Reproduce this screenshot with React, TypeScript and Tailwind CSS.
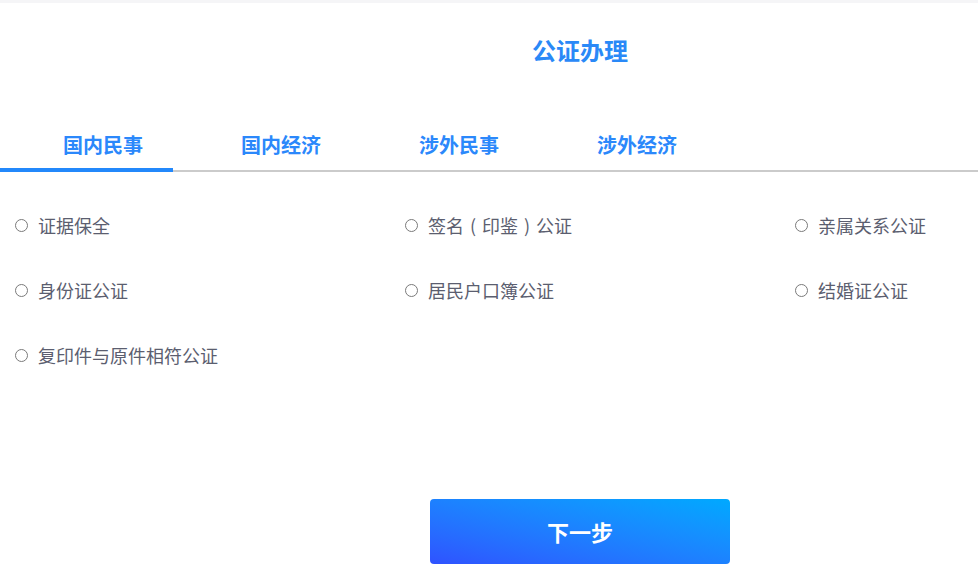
import React from 'react';

const tabs = ['国内民事', '国内经济', '涉外民事', '涉外经济'];

const items = [
  '证据保全',
  '签名（印鉴）公证',
  '亲属关系公证',
  '身份证公证',
  '居民户口簿公证',
  '结婚证公证',
  '复印件与原件相符公证',
];

const font = { fontFamily: '"Noto Sans CJK SC", "Noto Sans", sans-serif' };

// full-width parens drawn centred in their cell, as in the reference
function Label({ text }: { text: string }) {
  return (
    <span>
      {text.split(/([（）])/).map((part, i) =>
        part === '（' || part === '）' ? (
          <span key={i} className="inline-block w-[18px] text-center">
            {part === '（' ? '(' : ')'}
          </span>
        ) : (
          part
        )
      )}
    </span>
  );
}

export default function App() {
  return (
    <div className="w-[978px] h-[576px] overflow-hidden bg-white" style={font}>
      <div className="w-[1160px]">
        <div className="h-[3px] bg-[#f5f5f7]" />
        <h1 className="mt-[35px] h-6 text-center text-[24px] leading-6 font-bold text-[#2a89f7]">
          公证办理
        </h1>

        <div className="relative mt-[73px] flex border-b-2 border-[#cbcbcb] pl-[14px] pb-[15px]">
          {tabs.map((t) => (
            <div key={t} className="w-[178px] text-center text-[20px] leading-5 font-bold text-[#2b88fb]">
              {t}
            </div>
          ))}
          <span className="absolute left-0 bottom-[-2px] h-1 w-[173px] bg-[#2388fb]" />
        </div>

        <div className="mt-[21px] grid grid-cols-[390px_390px_390px] pl-[15px]">
          {items.map((it) => (
            <label key={it} className="flex h-[65px] items-center gap-[10px] text-[18px] text-[#5b5e6f]">
              <span className="h-[13px] w-[13px] rounded-full border border-[#7a7a7a]" />
              <Label text={it} />
            </label>
          ))}
        </div>

        <div className="mt-[111px] flex justify-center">
          <button className="h-[65px] w-[300px] rounded bg-gradient-to-tr from-[#2f52ff] to-[#00a9ff] text-[22px] font-bold text-white">
            下一步
          </button>
        </div>
      </div>
    </div>
  );
}
